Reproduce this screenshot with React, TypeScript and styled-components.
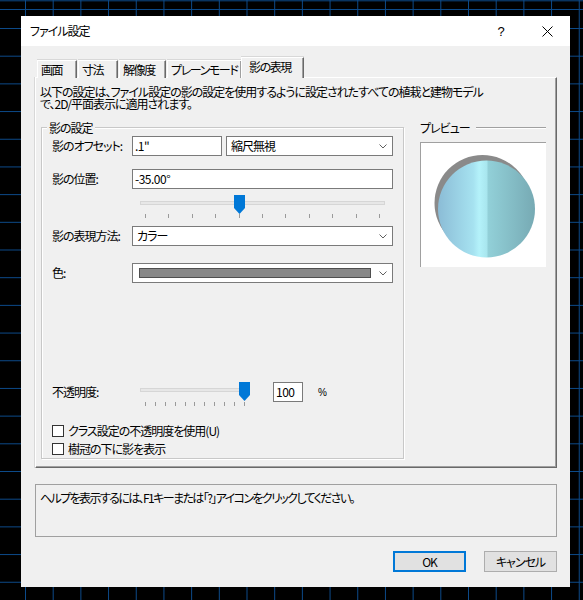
import React from "react";
import styled, { createGlobalStyle } from "styled-components";

const GlobalStyle = createGlobalStyle`
  html, body { margin: 0; padding: 0; }
  body {
    width: 583px;
    height: 600px;
    overflow: hidden;
    background-color: #000;
    background-image:
      linear-gradient(#0c4a8a, #0c4a8a),
      linear-gradient(to right, #0c4a8a 1px, transparent 1px),
      linear-gradient(to bottom, #0c4a8a 1px, transparent 1px);
    background-size: 100% 1px, 27.7px 27.7px, 27.7px 27.7px;
    background-position: 0 9px, 25px 0, 0 28px;
    background-repeat: no-repeat, repeat, repeat;
    font-family: "Noto Sans CJK JP", "Noto Sans", sans-serif;
    font-size: 12px;
    font-feature-settings: "palt";
    letter-spacing: -1px;
    color: #000;
  }
`;

const Screen = styled.div`
  padding: 16px 0 0 21px;
`;

const Dialog = styled.div`
  box-sizing: border-box;
  width: 549px;
  height: 571px;
  background: #f0f0f0;
  display: flex;
  flex-direction: column;
`;

const TitleBar = styled.div`
  height: 30px;
  background: #fff;
  display: flex;
  align-items: center;
  padding-left: 9px;
`;

const TitleText = styled.div`
  flex: 1;
  font-size: 12px;
  line-height: 14px;
`;

const TitleButton = styled.div`
  width: 46px;
  height: 30px;
  display: flex;
  align-items: center;
  justify-content: center;
  font-family: "Liberation Sans", sans-serif;
  font-size: 13px;
  letter-spacing: 0;
`;

const Body = styled.div`
  padding: 11px 13px 0 14px;
  display: flex;
  flex-direction: column;
`;

const TabStrip = styled.div`
  display: flex;
  align-items: flex-end;
  height: 21px;
  padding-left: 2px;
  margin-bottom: -1px;
  position: relative;
  z-index: 1;
`;

const Tab = styled.div<{ $w: number; $active?: boolean }>`
  box-sizing: border-box;
  width: ${(p) => p.$w}px;
  height: ${(p) => (p.$active ? 21 : 18)}px;
  margin: ${(p) => (p.$active ? "0 -2px 0 -2px" : "0 1px 0 0")};
  padding-left: ${(p) => (p.$active ? 7 : 3)}px;
  padding-bottom: ${(p) => (p.$active ? 2 : 0)}px;
  background: #f0f0f0;
  border-top: 1px solid #fff;
  border-left: 1px solid #fff;
  border-right: 1px solid #696969;
  box-shadow: inset -1px 0 #a0a0a0, 0 -1px 0 #d8d8d8;
  display: flex;
  align-items: center;
  font-size: 12px;
  line-height: 14px;
  letter-spacing: -1.4px;
  white-space: nowrap;
  overflow: hidden;
`;

const Panel = styled.div`
  box-sizing: border-box;
  height: 391px;
  border: 1px solid;
  border-color: #fff #696969 #696969 #fff;
  box-shadow: inset -1px -1px #a0a0a0, -1px 0 #d8d8d8;
  padding: 8px 0 0 4px;
  display: flex;
  flex-direction: column;
`;

const Description = styled.div`
  line-height: 12px;
  font-size: 12px;
`;

const MainRow = styled.div`
  display: flex;
  align-items: flex-start;
  margin-top: 11px;
`;

const GroupBox = styled.div`
  position: relative;
  box-sizing: border-box;
  width: 363px;
  height: 332px;
  margin: 6px 0 0 1px;
  border: 1px solid #c8c8c8;
  box-shadow: inset 1px 1px #fff, 1px 1px #fff;
  padding: 8px 10px 0 10px;
  display: flex;
  flex-direction: column;
`;

const Legend = styled.div`
  position: absolute;
  top: -7px;
  left: 5px;
  padding: 0 2px;
  background: #f0f0f0;
  line-height: 13px;
`;

const Row = styled.div<{ $mt?: number }>`
  display: grid;
  grid-template-columns: 80px 1fr;
  align-items: center;
  height: 20px;
  margin-top: ${(p) => p.$mt ?? 0}px;
`;

const Label = styled.div`
  white-space: nowrap;
  line-height: 14px;
`;

const Controls = styled.div`
  display: flex;
  align-items: center;
  gap: 4px;
  height: 20px;
`;

const TextBox = styled.div<{ $w?: number; $ml?: number }>`
  box-sizing: border-box;
  ${(p) => (p.$w ? `width: ${p.$w}px; flex: none;` : "flex: 1;")}
  margin-left: ${(p) => p.$ml ?? 0}px;
  height: 20px;
  background: #fff;
  border: 1px solid #7a7a7a;
  padding-left: 2px;
  display: flex;
  align-items: center;
  font-size: 12px;
  line-height: 14px;
  letter-spacing: -0.5px;
`;

const SelectBox = styled.div`
  box-sizing: border-box;
  flex: 1;
  height: 20px;
  background: #fff;
  border: 1px solid #7a7a7a;
  padding: 0 5px 0 4px;
  display: flex;
  align-items: center;
  gap: 6px;
  line-height: 14px;
`;

const SelectValue = styled.div`
  flex: 1;
  display: flex;
  align-items: center;
`;

const Swatch = styled.div`
  box-sizing: border-box;
  width: 232px;
  height: 10px;
  margin-left: 2px;
  background: #888;
  border: 1px solid #4f4f4f;
`;

const SliderWrap = styled.div<{ $w: number; $ml: number; $mt?: number }>`
  position: relative;
  width: ${(p) => p.$w}px;
  margin-left: ${(p) => p.$ml}px;
  margin-top: ${(p) => p.$mt ?? 0}px;
  padding-top: 6px;
  flex-shrink: 0;
`;

const Track = styled.div`
  box-sizing: border-box;
  height: 4px;
  background: #e7e7e7;
  border: 1px solid #d6d6d6;
`;

const Ticks = styled.div<{ $gap: number }>`
  display: flex;
  justify-content: space-between;
  padding: 0 5px;
  margin-top: ${(p) => p.$gap}px;
  height: 4px;
`;

const Tick = styled.div`
  width: 1px;
  height: 4px;
  background: #9a9a9a;
`;

const Thumb = styled.svg`
  position: absolute;
  top: 0;
`;

const OpacityRow = styled.div`
  display: flex;
  align-items: flex-start;
  margin-top: 99px;
`;

const OpacityLabel = styled(Label)`
  width: 88px;
  height: 20px;
  display: flex;
  align-items: center;
`;

const Percent = styled.div`
  margin-left: 15px;
  height: 20px;
  display: flex;
  align-items: center;
  font-family: "Liberation Sans", sans-serif;
  font-size: 10px;
  letter-spacing: 0;
`;

const CheckRow = styled.div<{ $mt: number }>`
  display: flex;
  align-items: center;
  gap: 4px;
  margin-top: ${(p) => p.$mt}px;
  line-height: 14px;
`;

const CheckBoxSquare = styled.div`
  box-sizing: border-box;
  width: 12px;
  height: 12px;
  background: #fff;
  border: 1px solid #333;
`;

const PreviewCol = styled.div`
  width: 126px;
  margin-left: 16px;
  display: flex;
  flex-direction: column;
`;

const PreviewHeader = styled.div`
  display: flex;
  align-items: center;
  height: 13px;
  line-height: 13px;
`;

const HeaderLine = styled.div`
  flex: 1;
  margin-left: 6px;
  height: 1px;
  background: #a0a0a0;
  box-shadow: 0 1px #fff;
`;

const PreviewBox = styled.div`
  box-sizing: border-box;
  margin-top: 8px;
  width: 126px;
  height: 125px;
  background: #fff;
  border-top: 1px solid #a0a0a0;
  border-left: 1px solid #a0a0a0;
`;

const HelpBox = styled.div`
  box-sizing: border-box;
  margin-top: 16px;
  height: 53px;
  border: 1px solid #a0a0a0;
  padding: 6px 0 0 4px;
  line-height: 14px;
  letter-spacing: -1.6px;
`;

const ButtonRow = styled.div`
  display: flex;
  justify-content: flex-end;
  gap: 18px;
  margin-top: 14px;
`;

const Button = styled.div<{ $primary?: boolean }>`
  box-sizing: border-box;
  width: 73px;
  height: 21px;
  background: #e1e1e1;
  border: ${(p) => (p.$primary ? "2px solid #0078d7" : "1px solid #adadad")};
  display: flex;
  align-items: center;
  justify-content: center;
  font-size: 12px;
  line-height: 14px;
`;

const Chevron = () => (
  <svg width="8" height="5" viewBox="0 0 8 5">
    <polyline points="0.5,0.5 4,4 7.5,0.5" fill="none" stroke="#606060" strokeWidth="1" />
  </svg>
);

const ThumbShape = ({ left }: { left: number }) => (
  <Thumb width="11" height="19" viewBox="0 0 11 19" style={{ left }}>
    <polygon points="0,0 11,0 11,13 5.5,19 0,13" fill="#0078d7" />
  </Thumb>
);

const Slider = ({
  w,
  ml,
  mt,
  thumb,
  gap,
  ticks,
}: {
  w: number;
  ml: number;
  mt?: number;
  thumb: number;
  gap: number;
  ticks: number;
}) => (
  <SliderWrap $w={w} $ml={ml} $mt={mt}>
    <Track />
    <Ticks $gap={gap}>
      {Array.from({ length: ticks }).map((_, i) => (
        <Tick key={i} />
      ))}
    </Ticks>
    <ThumbShape left={thumb} />
  </SliderWrap>
);

const PreviewArt = () => (
  <svg width="125" height="124" viewBox="0 0 125 124">
    <defs>
      <linearGradient id="ball" x1="17" y1="0" x2="115" y2="0" gradientUnits="userSpaceOnUse">
        <stop offset="0" stopColor="#8bbcd6" />
        <stop offset="0.36" stopColor="#a6e2f0" />
        <stop offset="0.42" stopColor="#b4f2fa" />
        <stop offset="0.5" stopColor="#a8e6ee" />
        <stop offset="0.51" stopColor="#92d0d8" />
        <stop offset="1" stopColor="#76a9b3" />
      </linearGradient>
    </defs>
    <circle cx="61.5" cy="60" r="48" fill="#8a8a8a" />
    <circle cx="65.5" cy="66" r="48.5" fill="url(#ball)" />
  </svg>
);

export default function App() {
  return (
    <>
      <GlobalStyle />
      <Screen>
        <Dialog>
          <TitleBar>
            <TitleText>ファイル設定</TitleText>
            <TitleButton>?</TitleButton>
            <TitleButton>
              <svg width="11" height="11" viewBox="0 0 11 11">
                <path d="M0.5 0.5 L10.5 10.5 M10.5 0.5 L0.5 10.5" stroke="#000" strokeWidth="1" />
              </svg>
            </TitleButton>
          </TitleBar>
          <Body>
            <TabStrip>
              <Tab $w={40}>画面</Tab>
              <Tab $w={40}>寸法</Tab>
              <Tab $w={47}>解像度</Tab>
              <Tab $w={75}>プレーンモード</Tab>
              <Tab $w={63} $active>
                影の表現
              </Tab>
            </TabStrip>
            <Panel>
              <Description>
                以下の設定は、ファイル設定の影の設定を使用するように設定されたすべての植栽と建物モデル
                <br />
                で、2D/平面表示に適用されます。
              </Description>
              <MainRow>
                <GroupBox>
                  <Legend>影の設定</Legend>
                  <Row>
                    <Label>影のオフセット:</Label>
                    <Controls>
                      <TextBox $w={90}>.1"</TextBox>
                      <SelectBox>
                        <SelectValue>縮尺無視</SelectValue>
                        <Chevron />
                      </SelectBox>
                    </Controls>
                  </Row>
                  <Row $mt={13}>
                    <Label>影の位置:</Label>
                    <Controls>
                      <TextBox>-35.00°</TextBox>
                    </Controls>
                  </Row>
                  <Slider w={245} ml={88} mt={6} thumb={93.5} gap={9} ticks={11} />
                  <Row $mt={8}>
                    <Label>影の表現方法:</Label>
                    <Controls>
                      <SelectBox>
                        <SelectValue>カラー</SelectValue>
                        <Chevron />
                      </SelectBox>
                    </Controls>
                  </Row>
                  <Row $mt={17}>
                    <Label>色:</Label>
                    <Controls>
                      <SelectBox>
                        <SelectValue>
                          <Swatch />
                        </SelectValue>
                        <Chevron />
                      </SelectBox>
                    </Controls>
                  </Row>
                  <OpacityRow>
                    <OpacityLabel>不透明度:</OpacityLabel>
                    <Slider w={110} ml={0} thumb={99} gap={10} ticks={11} />
                    <TextBox $w={30} $ml={23}>
                      100
                    </TextBox>
                    <Percent>%</Percent>
                  </OpacityRow>
                  <CheckRow $mt={18}>
                    <CheckBoxSquare />
                    <span>クラス設定の不透明度を使用(U)</span>
                  </CheckRow>
                  <CheckRow $mt={4}>
                    <CheckBoxSquare />
                    <span>樹冠の下に影を表示</span>
                  </CheckRow>
                </GroupBox>
                <PreviewCol>
                  <PreviewHeader>
                    <span>プレビュー</span>
                    <HeaderLine />
                  </PreviewHeader>
                  <PreviewBox>
                    <PreviewArt />
                  </PreviewBox>
                </PreviewCol>
              </MainRow>
            </Panel>
            <HelpBox>ヘルプを表示するには、F1キーまたは「?」アイコンをクリックしてください。</HelpBox>
            <ButtonRow>
              <Button $primary>OK</Button>
              <Button>キャンセル</Button>
            </ButtonRow>
          </Body>
        </Dialog>
      </Screen>
    </>
  );
}
